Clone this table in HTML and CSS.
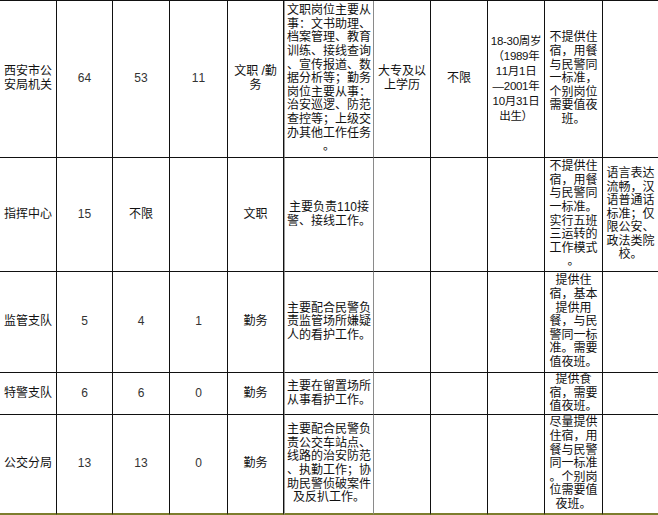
FILE: index.html
```html
<!DOCTYPE html>
<html lang="zh-CN">
<head>
<meta charset="utf-8">
<title>招聘岗位表</title>
<link rel="stylesheet" href="styles.css">
</head>
<body>
<table class="jobs">
  <colgroup>
    <col class="c1"><col class="c2"><col class="c3"><col class="c4"><col class="c5"><col class="c6"><col class="c7"><col class="c8"><col class="c9"><col class="c10"><col class="c11">
  </colgroup>
  <tbody>
    <tr class="r1">
      <td>西安市公<br>安局机关</td>
      <td class="num">64</td>
      <td class="num">53</td>
      <td class="num">11</td>
      <td>文职 /勤<br>务</td>
      <td class="duty">文职岗位主要从<br>事：文书助理、<br>档案管理、教育<br>训练、接线查询<br>、宣传报道、数<br>据分析等；勤务<br>岗位主要从事：<br>治安巡逻、防范<br>查控等；上级交<br>办其他工作任务<br>。</td>
      <td class="edu">大专及以<br>上学历</td>
      <td>不限</td>
      <td class="age">18-30周岁<br>（1989年<br>11月1日<br>—2001年<br>10月31日<br>出生）</td>
      <td>不提供住<br>宿，用餐<br>与民警同<br>一标准，<br>个别岗位<br>需要值夜<br>班。</td>
      <td class="last"></td>
    </tr>
    <tr class="r2">
      <td>指挥中心</td>
      <td class="num">15</td>
      <td>不限</td>
      <td></td>
      <td>文职</td>
      <td class="duty">主要负责110接<br>警、接线工作。</td>
      <td class="edu"></td>
      <td></td>
      <td></td>
      <td>不提供住<br>宿，用餐<br>与民警同<br>一标准。<br>实行五班<br>三运转的<br>工作模式<br>。</td>
      <td class="last">语言表达<br>流畅，汉<br>语普通话<br>标准；仅<br>限公安、<br>政法类院<br>校。</td>
    </tr>
    <tr class="r3">
      <td>监管支队</td>
      <td class="num">5</td>
      <td class="num">4</td>
      <td class="num">1</td>
      <td>勤务</td>
      <td class="duty">主要配合民警负<br>责监管场所嫌疑<br>人的看护工作。</td>
      <td class="edu"></td>
      <td></td>
      <td></td>
      <td>提供住<br>宿，基本<br>提供用<br>餐，与民<br>警同一标<br>准。需要<br>值夜班。</td>
      <td class="last"></td>
    </tr>
    <tr class="r4">
      <td>特警支队</td>
      <td class="num">6</td>
      <td class="num">6</td>
      <td class="num">0</td>
      <td>勤务</td>
      <td class="duty">主要在留置场所<br>从事看护工作。</td>
      <td class="edu"></td>
      <td></td>
      <td></td>
      <td>提供食<br>宿，需要<br>值夜班。</td>
      <td class="last"></td>
    </tr>
    <tr class="r5">
      <td>公交分局</td>
      <td class="num">13</td>
      <td class="num">13</td>
      <td class="num">0</td>
      <td>勤务</td>
      <td class="duty">主要配合民警负<br>责公交车站点、<br>线路的治安防范<br>、执勤工作；协<br>助民警侦破案件<br>及反扒工作。</td>
      <td class="edu"></td>
      <td></td>
      <td></td>
      <td>尽量提供<br>住宿，用<br>餐与民警<br>同一标准<br>。个别岗<br>位需要值<br>夜班。</td>
      <td class="last"></td>
    </tr>
  </tbody>
</table>
</body>
</html>
```

FILE: styles.css
```css
html, body {
  margin: 0;
  padding: 0;
  background: #ffffff;
}

body {
  overflow: hidden;
}

.jobs {
  width: 658px;
  table-layout: fixed;
  border-collapse: separate;
  border-spacing: 0;
  border-top: 1px solid #111111;
  font-family: "Liberation Sans", "Noto Sans CJK SC", sans-serif;
  font-size: 12px;
  line-height: 13.6px;
  color: #111111;
  text-spacing-trim: space-all;
  font-kerning: none;
}

.c1 { width: 57px; }
.c2 { width: 56px; }
.c3 { width: 57px; }
.c4 { width: 58px; }
.c5 { width: 56px; }
.c6 { width: 90px; }
.c7 { width: 57px; }
.c8 { width: 57px; }
.c9 { width: 57px; }
.c10 { width: 58px; }
.c11 { width: 55px; }

.jobs td {
  box-sizing: border-box;
  padding: 0;
  text-align: center;
  vertical-align: middle;
  white-space: nowrap;
  border-right: 1px solid #111111;
  border-bottom: 1px solid #111111;
}

.jobs td.duty {
  border-left: 1px solid #9a9a9a;
  border-right: 1px solid #8a8a8a;
}

.jobs td.last {
  border-right: none;
}

.jobs td.num {
  color: #333333;
}

.jobs td.age {
  font-size: 11.5px;
  line-height: 15px;
  letter-spacing: -0.3px;
}

.r1 { height: 157px; }
.r2 { height: 114px; }
.r3 { height: 101px; }
.r4 { height: 42px; }
.r5 { height: 100px; }

.r5 td {
  border-bottom: 2px solid #7d7d2e;
}
```
